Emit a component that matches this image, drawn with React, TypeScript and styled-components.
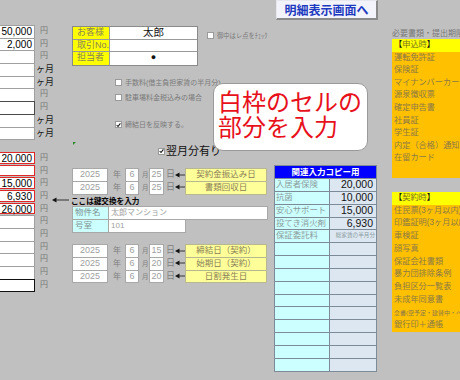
import React from 'react';
import styled, { createGlobalStyle, css } from 'styled-components';

const FONT = `"Liberation Sans", "Noto Sans CJK JP", sans-serif`;

const GlobalStyle = createGlobalStyle`
  html, body { margin: 0; padding: 0; background: #c0c0c0; }
  body { font-family: ${FONT}; }
  * { box-sizing: border-box; }
`;

const Page = styled.div`
  position: relative;
  width: 460px;
  height: 380px;
  overflow: hidden;
  background: #c0c0c0;
  display: flex;
  font-family: ${FONT};
`;

/* ---------- left column ---------- */
type CellKind = 'white' | 'dark' | 'red' | 'black' | 'none';

const LeftCol = styled.div`
  width: 52px;
  flex: none;
  padding-top: 25px;
  display: flex;
  flex-direction: column;
`;

const LRow = styled.div`
  height: 12.7px;
  display: flex;
  align-items: flex-start;
`;

const kindStyles: Record<CellKind, ReturnType<typeof css>> = {
  white: css`background: #fff; border: 1px solid #a0a0a0;`,
  dark: css`background: #fff; border: 1px solid #4a4a4a; z-index: 1;`,
  red: css`background: #fff; border: 1px solid #e02828; z-index: 1; height: 11.7px;`,
  black: css`background: #fff; border: 1.5px solid #111; z-index: 1;`,
  none: css`visibility: hidden;`,
};

const LCell = styled.div<{ $kind: CellKind }>`
  position: relative;
  width: 36px;
  height: 13.7px;
  margin-left: -1px;
  flex: none;
  font-size: 10px;
  color: #000;
  text-align: right;
  padding-right: 2px;
  line-height: 11px;
  ${(p) => kindStyles[p.$kind]}
`;

const Unit = styled.span<{ $month?: boolean }>`
  margin-left: ${(p) => (p.$month ? 1 : 5)}px;
  font-size: ${(p) => (p.$month ? 9 : 8)}px;
  color: ${(p) => (p.$month ? '#1a1a1a' : '#777')};
  line-height: 12.7px;
  white-space: nowrap;
`;

/* ---------- middle column ---------- */
const MidCol = styled.div`
  width: 220px;
  flex: none;
  display: flex;
  flex-direction: column;
`;

const CustomerRow = styled.div`
  margin-top: 26px;
  padding-left: 20px;
  display: flex;
  align-items: flex-start;
  gap: 9px;
`;

const CustomerTable = styled.div`
  width: 126px;
  flex: none;
  display: grid;
  grid-template-columns: 37px 1fr;
  grid-auto-rows: 12.7px;
  border: 1px solid #8a8a8a;
`;

const CLabel = styled.div<{ $last?: boolean }>`
  background: #ffff00;
  border-right: 1px solid #9a9a9a;
  border-bottom: ${(p) => (p.$last ? 'none' : '1px solid #9a9a9a')};
  font-size: 9px;
  color: #8a8458;
  line-height: 11.7px;
  padding-left: 4px;
  white-space: nowrap;
`;

const CValue = styled.div<{ $last?: boolean; $dot?: boolean }>`
  background: #fff;
  border-bottom: ${(p) => (p.$last ? 'none' : '1px solid #9a9a9a')};
  font-size: ${(p) => (p.$dot ? 9 : 10.5)}px;
  color: #111;
  text-align: center;
  line-height: 11.7px;
`;

const CheckLine = styled.div<{ $top: number; $left: number }>`
  display: flex;
  align-items: center;
  gap: 3px;
  height: 9px;
  margin-top: ${(p) => p.$top}px;
  padding-left: ${(p) => p.$left}px;
`;

const Box = styled.span`
  width: 7px;
  height: 7px;
  flex: none;
  background: #fff;
  border: 1px solid #9a9a9a;
  display: flex;
  align-items: center;
  justify-content: center;
`;

const CheckText = styled.span<{ $size?: number }>`
  font-size: ${(p) => p.$size ?? 7}px;
  color: #7a7a7a;
  white-space: nowrap;
  line-height: 9px;
`;

const NextMonthRow = styled.div`
  margin-top: 16px;
  height: 12px;
  padding-left: 21px;
  display: flex;
  align-items: center;
`;

const CommentMark = styled.span`
  align-self: flex-start;
  margin-top: -3px;
  width: 0;
  height: 0;
  border-top: 3px solid #2a8a2a;
  border-right: 3px solid transparent;
`;

const NextMonthBox = styled(Box)`
  margin-left: 82px;
`;

const NextMonthText = styled.span`
  margin-left: 1px;
  font-size: 11px;
  color: #111;
  line-height: 12px;
  white-space: nowrap;
`;

const DateGroup = styled.div<{ $top: number }>`
  margin-top: ${(p) => p.$top}px;
  display: flex;
  flex-direction: column;
`;

const DateRow = styled.div`
  height: 12.7px;
  display: flex;
  align-items: flex-start;
  padding-left: 20px;
`;

const DCell = styled.div<{ $w: number; $ml?: number }>`
  width: ${(p) => p.$w}px;
  margin-left: ${(p) => p.$ml ?? 0}px;
  height: 13.7px;
  flex: none;
  background: #fff;
  border: 1px solid #a8a8a8;
  font-size: 9px;
  color: #a0a0a0;
  text-align: center;
  line-height: 11.7px;
`;

const DUnit = styled.span<{ $w: number; $ml: number; $size: number }>`
  width: ${(p) => p.$w}px;
  margin-left: ${(p) => p.$ml}px;
  flex: none;
  font-size: ${(p) => p.$size}px;
  color: #808080;
  text-align: center;
  line-height: 13px;
`;

const ArrowWrap = styled.span<{ $w: number; $ml: number }>`
  width: ${(p) => p.$w}px;
  margin-left: ${(p) => p.$ml}px;
  height: 12.7px;
  flex: none;
  display: flex;
  align-items: center;
`;

const YLabel = styled.div`
  width: 82px;
  height: 13.7px;
  flex: none;
  background: #ffff99;
  border: 1px solid #b8b890;
  font-size: 8.5px;
  color: #8a8058;
  text-align: center;
  line-height: 11.7px;
  white-space: nowrap;
`;

const KeyRow = styled.div`
  height: 12.7px;
  display: flex;
  align-items: center;
`;

const KeyText = styled.span`
  font-size: 7.6px;
  font-weight: bold;
  color: #000;
  white-space: nowrap;
`;

const PropRow = styled.div`
  height: 12.7px;
  display: flex;
  align-items: flex-start;
  padding-left: 20px;
`;

const PropLabel = styled.div`
  width: 37px;
  height: 13.7px;
  flex: none;
  background: #ccffff;
  border: 1px solid #a8a8a8;
  font-size: 8.5px;
  color: #7f9494;
  padding-left: 2px;
  line-height: 11.7px;
  white-space: nowrap;
`;

const PropValue = styled.div<{ $w: number }>`
  width: ${(p) => p.$w}px;
  height: 13.7px;
  margin-left: -1px;
  flex: none;
  background: #fff;
  border: 1px solid #a8a8a8;
  font-size: 8px;
  color: #a0a0a0;
  padding-left: 2px;
  line-height: 11.7px;
  white-space: nowrap;
`;

/* ---------- table column ---------- */
const TableCol = styled.div`
  width: 108px;
  flex: none;
  display: flex;
  flex-direction: column;
`;

const NavButton = styled.div`
  margin-left: 4px;
  width: 102px;
  height: 20px;
  background: #f3f3fb;
  border-top: 1px solid #e6e6ee;
  border-left: 1px solid #e6e6ee;
  border-right: 2px solid #8a8a8a;
  border-bottom: 2px solid #8a8a8a;
  color: #1c39c0;
  font-weight: bold;
  font-size: 12px;
  display: flex;
  align-items: center;
  justify-content: center;
  white-space: nowrap;
`;

const RelTable = styled.div`
  margin-top: 145px;
  margin-left: 2px;
  width: 103px;
  display: grid;
  grid-template-columns: 54px 1fr;
  grid-template-rows: 12px;
  grid-auto-rows: 11.85px;
  gap: 1px;
  background: #7d8b98;
  border: 1px solid #7d8b98;
`;

const RelHead = styled.div`
  grid-column: 1 / -1;
  background: #0000ff;
  color: #fff;
  font-size: 8.5px;
  font-weight: bold;
  text-align: center;
  line-height: 12px;
  white-space: nowrap;
`;

const RelLabel = styled.div`
  background: #ccffff;
  font-size: 8.4px;
  color: #8a9c9c;
  padding-left: 1px;
  line-height: 11.85px;
  white-space: nowrap;
  overflow: hidden;
`;

const RelValue = styled.div<{ $small?: boolean }>`
  background: #dde7f2;
  font-size: ${(p) => (p.$small ? 5.6 : 10.5)}px;
  color: ${(p) => (p.$small ? '#8a9c9c' : '#111')};
  text-align: right;
  padding-right: ${(p) => (p.$small ? 1 : 3)}px;
  line-height: 11.85px;
  white-space: nowrap;
  overflow: hidden;
`;

/* ---------- list column ---------- */
const ListCol = styled.div`
  flex: 1;
  min-width: 0;
  padding-left: 12px;
  display: flex;
  flex-direction: column;
`;

const ListHead = styled.div`
  margin-top: 29px;
  height: 10px;
  font-size: 8px;
  color: #777;
  line-height: 10px;
  white-space: nowrap;
`;

const ListBlock = styled.div<{ $top: number }>`
  margin-top: ${(p) => p.$top}px;
  width: 80px;
  background: #ffc000;
  display: flex;
  flex-direction: column;
`;

const ListItem = styled.div<{ $h: number; $head?: boolean; $small?: boolean }>`
  height: ${(p) => p.$h}px;
  line-height: ${(p) => p.$h}px;
  background: ${(p) => (p.$head ? '#ffff00' : 'transparent')};
  font-size: ${(p) => (p.$small ? 6 : 8.2)}px;
  color: ${(p) => (p.$head ? '#7a7420' : '#8c7a48')};
  padding-left: 2px;
  white-space: nowrap;
  overflow: hidden;
`;

const Bracket = styled.span`
  color: #111;
`;

/* ---------- callout ---------- */
const Callout = styled.div`
  position: absolute;
  left: 213px;
  top: 83px;
  width: 155px;
  height: 68px;
  background: #fff;
  border: 1px solid #9a9a9a;
  border-radius: 10px;
  padding: 4px 0 0 4px;
  color: #e8101a;
  font-family: "Noto Sans CJK JP", sans-serif;
  font-size: 24px;
  line-height: 25px;
  white-space: nowrap;
`;

/* ---------- small drawings ---------- */
const Tick = () => (
  <svg width="6" height="6" viewBox="0 0 6 6">
    <path d="M0.8 3 L2.4 4.8 L5.3 1" fill="none" stroke="#111" strokeWidth="1.3" />
  </svg>
);

const LeftArrow = ({ w }: { w: number }) => (
  <svg width={w} height="6" viewBox={`0 0 ${w} 6`}>
    <polygon points="0,3 4.5,0.5 4.5,5.5" fill="#111" />
    <line x1="4" y1="3" x2={w} y2="3" stroke="#333" strokeWidth="1" />
  </svg>
);

/* ---------- data ---------- */
type LeftRow = [CellKind, string, 'yen' | 'month' | ''];
const leftRows: LeftRow[] = [
  ['white', '50,000', 'yen'],
  ['white', '2,000', 'yen'],
  ['white', '', 'yen'],
  ['white', '', 'month'],
  ['white', '', 'month'],
  ['white', '', 'yen'],
  ['dark', '', 'yen'],
  ['white', '', 'month'],
  ['white', '', 'month'],
  ['none', '', ''],
  ['red', '20,000', 'yen'],
  ['red', '', 'yen'],
  ['red', '15,000', 'yen'],
  ['red', '6,930', 'yen'],
  ['red', '26,000', 'yen'],
  ['white', '', 'yen'],
  ['white', '', 'yen'],
  ['white', '', 'yen'],
  ['white', '', 'yen'],
  ['white', '', 'yen'],
  ['black', '', 'yen'],
];

const dates1 = [
  ['2025', '6', '25', '契約金振込み日'],
  ['2025', '6', '25', '書類回収日'],
];
const dates2 = [
  ['2025', '6', '15', '締結日（契約）'],
  ['2025', '6', '20', '始期日（契約）'],
  ['2025', '6', '20', '日割発生日'],
];

const relRows: [string, string, boolean?][] = [
  ['入居者保険', '20,000'],
  ['抗菌', '10,000'],
  ['安心サポート', '15,000'],
  ['投てき消火剤', '6,930'],
  ['保証委託料', '総家賃の半月分', true],
  ...Array.from({ length: 10 }, () => ['', ''] as [string, string]),
];

const list1 = [
  '運転免許証',
  '保険証',
  'マイナンバーカード',
  '源泉徴収票',
  '確定申告書',
  '社員証',
  '学生証',
  '内定（合格）通知書',
  '在留カード',
  '',
];

const list2: [string, boolean?][] = [
  ['住民票(3ヶ月以内)'],
  ['印鑑証明(3ヶ月以内)'],
  ['車検証'],
  ['顔写真'],
  ['保証会社書類'],
  ['暴力団排除条例'],
  ['負担区分一覧表'],
  ['未成年同意書'],
  ['念書(空予定・建替中・ペット)', true],
  ['銀行印＋通帳'],
];

const DateLine = ({ d }: { d: string[] }) => (
  <DateRow>
    <DCell $w={36}>{d[0]}</DCell>
    <DUnit $w={8} $ml={5} $size={8}>年</DUnit>
    <DCell $w={14} $ml={4}>{d[1]}</DCell>
    <DUnit $w={5} $ml={3} $size={6.5}>月</DUnit>
    <DCell $w={15} $ml={2}>{d[2]}</DCell>
    <DUnit $w={8} $ml={2} $size={9}>日</DUnit>
    <ArrowWrap $w={10} $ml={1}>
      <LeftArrow w={10} />
    </ArrowWrap>
    <YLabel>{d[3]}</YLabel>
  </DateRow>
);

export default function App() {
  return (
    <>
      <GlobalStyle />
      <Page>
        <LeftCol>
          {leftRows.map(([kind, val, unit], i) => (
            <LRow key={i}>
              <LCell $kind={kind}>{val}</LCell>
              {unit && <Unit $month={unit === 'month'}>{unit === 'month' ? 'ヶ月' : '円'}</Unit>}
            </LRow>
          ))}
        </LeftCol>

        <MidCol>
          <CustomerRow>
            <CustomerTable>
              <CLabel>お客様</CLabel>
              <CValue>太郎</CValue>
              <CLabel>取引No.</CLabel>
              <CValue />
              <CLabel $last>担当者</CLabel>
              <CValue $last $dot>●</CValue>
            </CustomerTable>
            <CheckLine $top={5} $left={0}>
              <Box />
              <CheckText $size={6.3}>御中はレ点をﾁｪｯｸ</CheckText>
            </CheckLine>
          </CustomerRow>

          <CheckLine $top={12.3} $left={63}>
            <Box />
            <CheckText>手数料(借主負担家賃の半月分)</CheckText>
          </CheckLine>
          <CheckLine $top={5.5} $left={63}>
            <Box />
            <CheckText>駐車場料金税込みの場合</CheckText>
          </CheckLine>
          <CheckLine $top={18.5} $left={63}>
            <Box>
              <Tick />
            </Box>
            <CheckText>締結日を反映する。</CheckText>
          </CheckLine>

          <NextMonthRow>
            <CommentMark />
            <NextMonthBox>
              <Tick />
            </NextMonthBox>
            <NextMonthText>翌月分有り</NextMonthText>
          </NextMonthRow>

          <DateGroup $top={11}>
            {dates1.map((d, i) => (
              <DateLine key={i} d={d} />
            ))}
            <KeyRow>
              <ArrowWrap $w={19} $ml={0}>
                <LeftArrow w={17} />
              </ArrowWrap>
              <KeyText>ここは鍵交換を入力</KeyText>
            </KeyRow>
            <PropRow>
              <PropLabel>物件名</PropLabel>
              <PropValue $w={160}>太郎マンション</PropValue>
            </PropRow>
            <PropRow>
              <PropLabel>号室</PropLabel>
              <PropValue $w={78}>101</PropValue>
            </PropRow>
          </DateGroup>

          <DateGroup $top={12.5}>
            {dates2.map((d, i) => (
              <DateLine key={i} d={d} />
            ))}
          </DateGroup>
        </MidCol>

        <TableCol>
          <NavButton>明細表示画面へ</NavButton>
          <RelTable>
            <RelHead>関連入力コピー用</RelHead>
            {relRows.map(([label, value, small], i) => (
              <React.Fragment key={i}>
                <RelLabel>{label}</RelLabel>
                <RelValue $small={small}>{value}</RelValue>
              </React.Fragment>
            ))}
          </RelTable>
        </TableCol>

        <ListCol>
          <ListHead>必要書類・提出期限</ListHead>
          <ListBlock $top={0}>
            <ListItem $h={12.6} $head>
              <Bracket>【</Bracket>申込時<Bracket>】</Bracket>
            </ListItem>
            {list1.map((t, i) => (
              <ListItem key={i} $h={12.6}>
                {t}
              </ListItem>
            ))}
          </ListBlock>
          <ListBlock $top={14.4}>
            <ListItem $h={12.6} $head>
              <Bracket>【</Bracket>契約時<Bracket>】</Bracket>
            </ListItem>
            {list2.map(([t, small], i) => (
              <ListItem key={i} $h={12.75} $small={small}>
                {t}
              </ListItem>
            ))}
          </ListBlock>
        </ListCol>

        <Callout>
          白枠のセルの
          <br />
          部分を入力
        </Callout>
      </Page>
    </>
  );
}
